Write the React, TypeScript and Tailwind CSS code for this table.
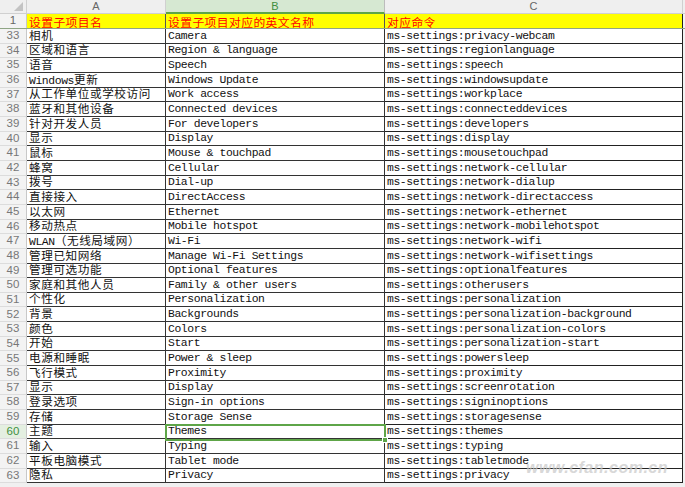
import React from "react";

const rows: [number, string, string, string][] = [
  [33, "相机", "Camera", "ms-settings:privacy-webcam"],
  [34, "区域和语言", "Region & language", "ms-settings:regionlanguage"],
  [35, "语音", "Speech", "ms-settings:speech"],
  [36, "Windows更新", "Windows Update", "ms-settings:windowsupdate"],
  [37, "从工作单位或学校访问", "Work access", "ms-settings:workplace"],
  [38, "蓝牙和其他设备", "Connected devices", "ms-settings:connecteddevices"],
  [39, "针对开发人员", "For developers", "ms-settings:developers"],
  [40, "显示", "Display", "ms-settings:display"],
  [41, "鼠标", "Mouse & touchpad", "ms-settings:mousetouchpad"],
  [42, "蜂窝", "Cellular", "ms-settings:network-cellular"],
  [43, "拨号", "Dial-up", "ms-settings:network-dialup"],
  [44, "直接接入", "DirectAccess", "ms-settings:network-directaccess"],
  [45, "以太网", "Ethernet", "ms-settings:network-ethernet"],
  [46, "移动热点", "Mobile hotspot", "ms-settings:network-mobilehotspot"],
  [47, "WLAN（无线局域网）", "Wi-Fi", "ms-settings:network-wifi"],
  [48, "管理已知网络", "Manage Wi-Fi Settings", "ms-settings:network-wifisettings"],
  [49, "管理可选功能", "Optional features", "ms-settings:optionalfeatures"],
  [50, "家庭和其他人员", "Family & other users", "ms-settings:otherusers"],
  [51, "个性化", "Personalization", "ms-settings:personalization"],
  [52, "背景", "Backgrounds", "ms-settings:personalization-background"],
  [53, "颜色", "Colors", "ms-settings:personalization-colors"],
  [54, "开始", "Start", "ms-settings:personalization-start"],
  [55, "电源和睡眠", "Power & sleep", "ms-settings:powersleep"],
  [56, "飞行模式", "Proximity", "ms-settings:proximity"],
  [57, "显示", "Display", "ms-settings:screenrotation"],
  [58, "登录选项", "Sign-in options", "ms-settings:signinoptions"],
  [59, "存储", "Storage Sense", "ms-settings:storagesense"],
  [60, "主题", "Themes", "ms-settings:themes"],
  [61, "输入", "Typing", "ms-settings:typing"],
  [62, "平板电脑模式", "Tablet mode", "ms-settings:tabletmode"],
  [63, "隐私", "Privacy", "ms-settings:privacy"],
];

const mono = { fontFamily: '"Liberation Mono", "DejaVu Sans Mono", monospace' };
const cjk = { fontFamily: '"Noto Sans CJK SC", "Noto Sans", sans-serif' };
const sans = { fontFamily: '"Liberation Sans", Arial, sans-serif' };

function Mixed({ text }: { text: string }) {
  const parts = text.split(/([\x00-\x7F]+)/).filter((p) => p.length > 0);
  return (
    <span className="relative top-[-1px] inline-block h-[13px] leading-[13px] whitespace-nowrap text-[11.6px] tracking-[0.6px]" style={cjk}>
      {parts.map((p, i) =>
        /^[\x00-\x7F]+$/.test(p) ? (
          <span key={i} className="text-[11.4px] tracking-[-0.4px]" style={mono}>
            {p}
          </span>
        ) : (
          <span key={i}>{p}</span>
        )
      )}
    </span>
  );
}

function Mono({ text }: { text: string }) {
  return (
    <span className="inline-block h-[13px] leading-[13px] whitespace-nowrap text-[11.4px] tracking-[-0.4px]" style={mono}>
      {text}
    </span>
  );
}

function HeadText({ text }: { text: string }) {
  return (
    <span className="inline-block h-[13px] leading-[13px] text-[11.8px] tracking-[0.4px] whitespace-nowrap" style={cjk}>
      {text}
    </span>
  );
}

export default function App() {
  return (
    <div className="relative w-[685px] h-[487px] overflow-hidden bg-[#f0f0f0] select-none">
      {/* column header row */}
      <div className="flex h-[14px] bg-[#efefef] text-[11px] text-[#666]" style={sans}>
        <div className="relative w-[27px] shrink-0 border-r border-b border-[#d0d0d0]">
          <svg className="absolute right-[3px] bottom-[2px]" width="9" height="9" viewBox="0 0 9 9">
            <polygon points="9,0 9,9 0,9" fill="#c3c3c3" />
          </svg>
        </div>
        <div className="w-[139px] shrink-0 border-r border-b border-[#d0d0d0] flex items-center justify-center leading-none">A</div>
        <div className="w-[219px] shrink-0 border-r border-[#bcbcbc] border-b-2 border-b-[#5ea548] bg-[#d6e8d2] text-[#3f8f3f] flex items-center justify-center leading-none">B</div>
        <div className="w-[298px] shrink-0 border-r border-b border-[#d0d0d0] flex items-center justify-center leading-none">C</div>
        <div className="flex-1 border-b border-[#d0d0d0]" />
      </div>

      {/* row 1 (frozen) */}
      <div className="flex h-[15px] border-b border-[#8fa585]">
        <div className="w-[27px] shrink-0 bg-[#f3f3f3] border-r border-[#c8c8c8] flex items-center justify-center text-[11.5px] text-[#666] leading-none" style={sans}>
          1
        </div>
        <div className="w-[139px] shrink-0 bg-[#ffff00] border-r border-[#555] flex items-end pl-[2px] text-[#ff0000]">
          <HeadText text="设置子项目名" />
        </div>
        <div className="w-[219px] shrink-0 bg-[#ffff00] border-r border-[#555] flex items-end pl-[2px] text-[#ff0000]">
          <HeadText text="设置子项目对应的英文名称" />
        </div>
        <div className="w-[298px] shrink-0 bg-[#ffff00] border-r border-[#222] flex items-end pl-[2px] text-[#ff0000]">
          <HeadText text="对应命令" />
        </div>
        <div className="flex-1 bg-[#f3f3f3]" />
      </div>

      {/* data rows */}
      {rows.map(([n, a, b, c]) => {
        const sel = n === 60;
        return (
          <div key={n} className="flex h-[14.67px]">
            <div
              className={`w-[27px] shrink-0 border-r border-b border-r-[#c8c8c8] border-b-[#dcdcdc] flex items-center justify-center text-[11.5px] leading-none ${sel ? "bg-[#e4efe1] text-[#3f8f3f]" : "bg-[#f3f3f3] text-[#777]"}`}
              style={sans}
            >
              {n}
            </div>
            <div className="w-[139px] shrink-0 bg-white border-r border-b border-[#333] flex items-end pl-[2px] text-[#111]">
              <Mixed text={a} />
            </div>
            <div className="w-[219px] shrink-0 bg-white border-r border-b border-[#333] flex items-end pl-[2px] text-[#111]">
              <Mono text={b} />
            </div>
            <div className="w-[298px] shrink-0 bg-white border-r border-b border-[#222] flex items-end pl-[2px] text-[#111]">
              <Mono text={c} />
            </div>
            <div className="flex-1 bg-[#f3f3f3]" />
          </div>
        );
      })}

      {/* selected cell B60 */}
      <div className="absolute left-[165px] top-[424px] w-[221px] h-[17px] border-2 border-[#5ea548] pointer-events-none" />
      <div className="absolute left-[382px] top-[437px] w-[6px] h-[6px] bg-[#5ea548] border border-white pointer-events-none" />

      {/* watermark */}
      <div
        className="absolute right-[17px] bottom-[9px] text-[16px] italic font-bold text-[#c8c8c8] opacity-70 tracking-[0.5px] pointer-events-none leading-[20px]"
        style={sans}
      >
        www.cfan.com.cn
      </div>
    </div>
  );
}
